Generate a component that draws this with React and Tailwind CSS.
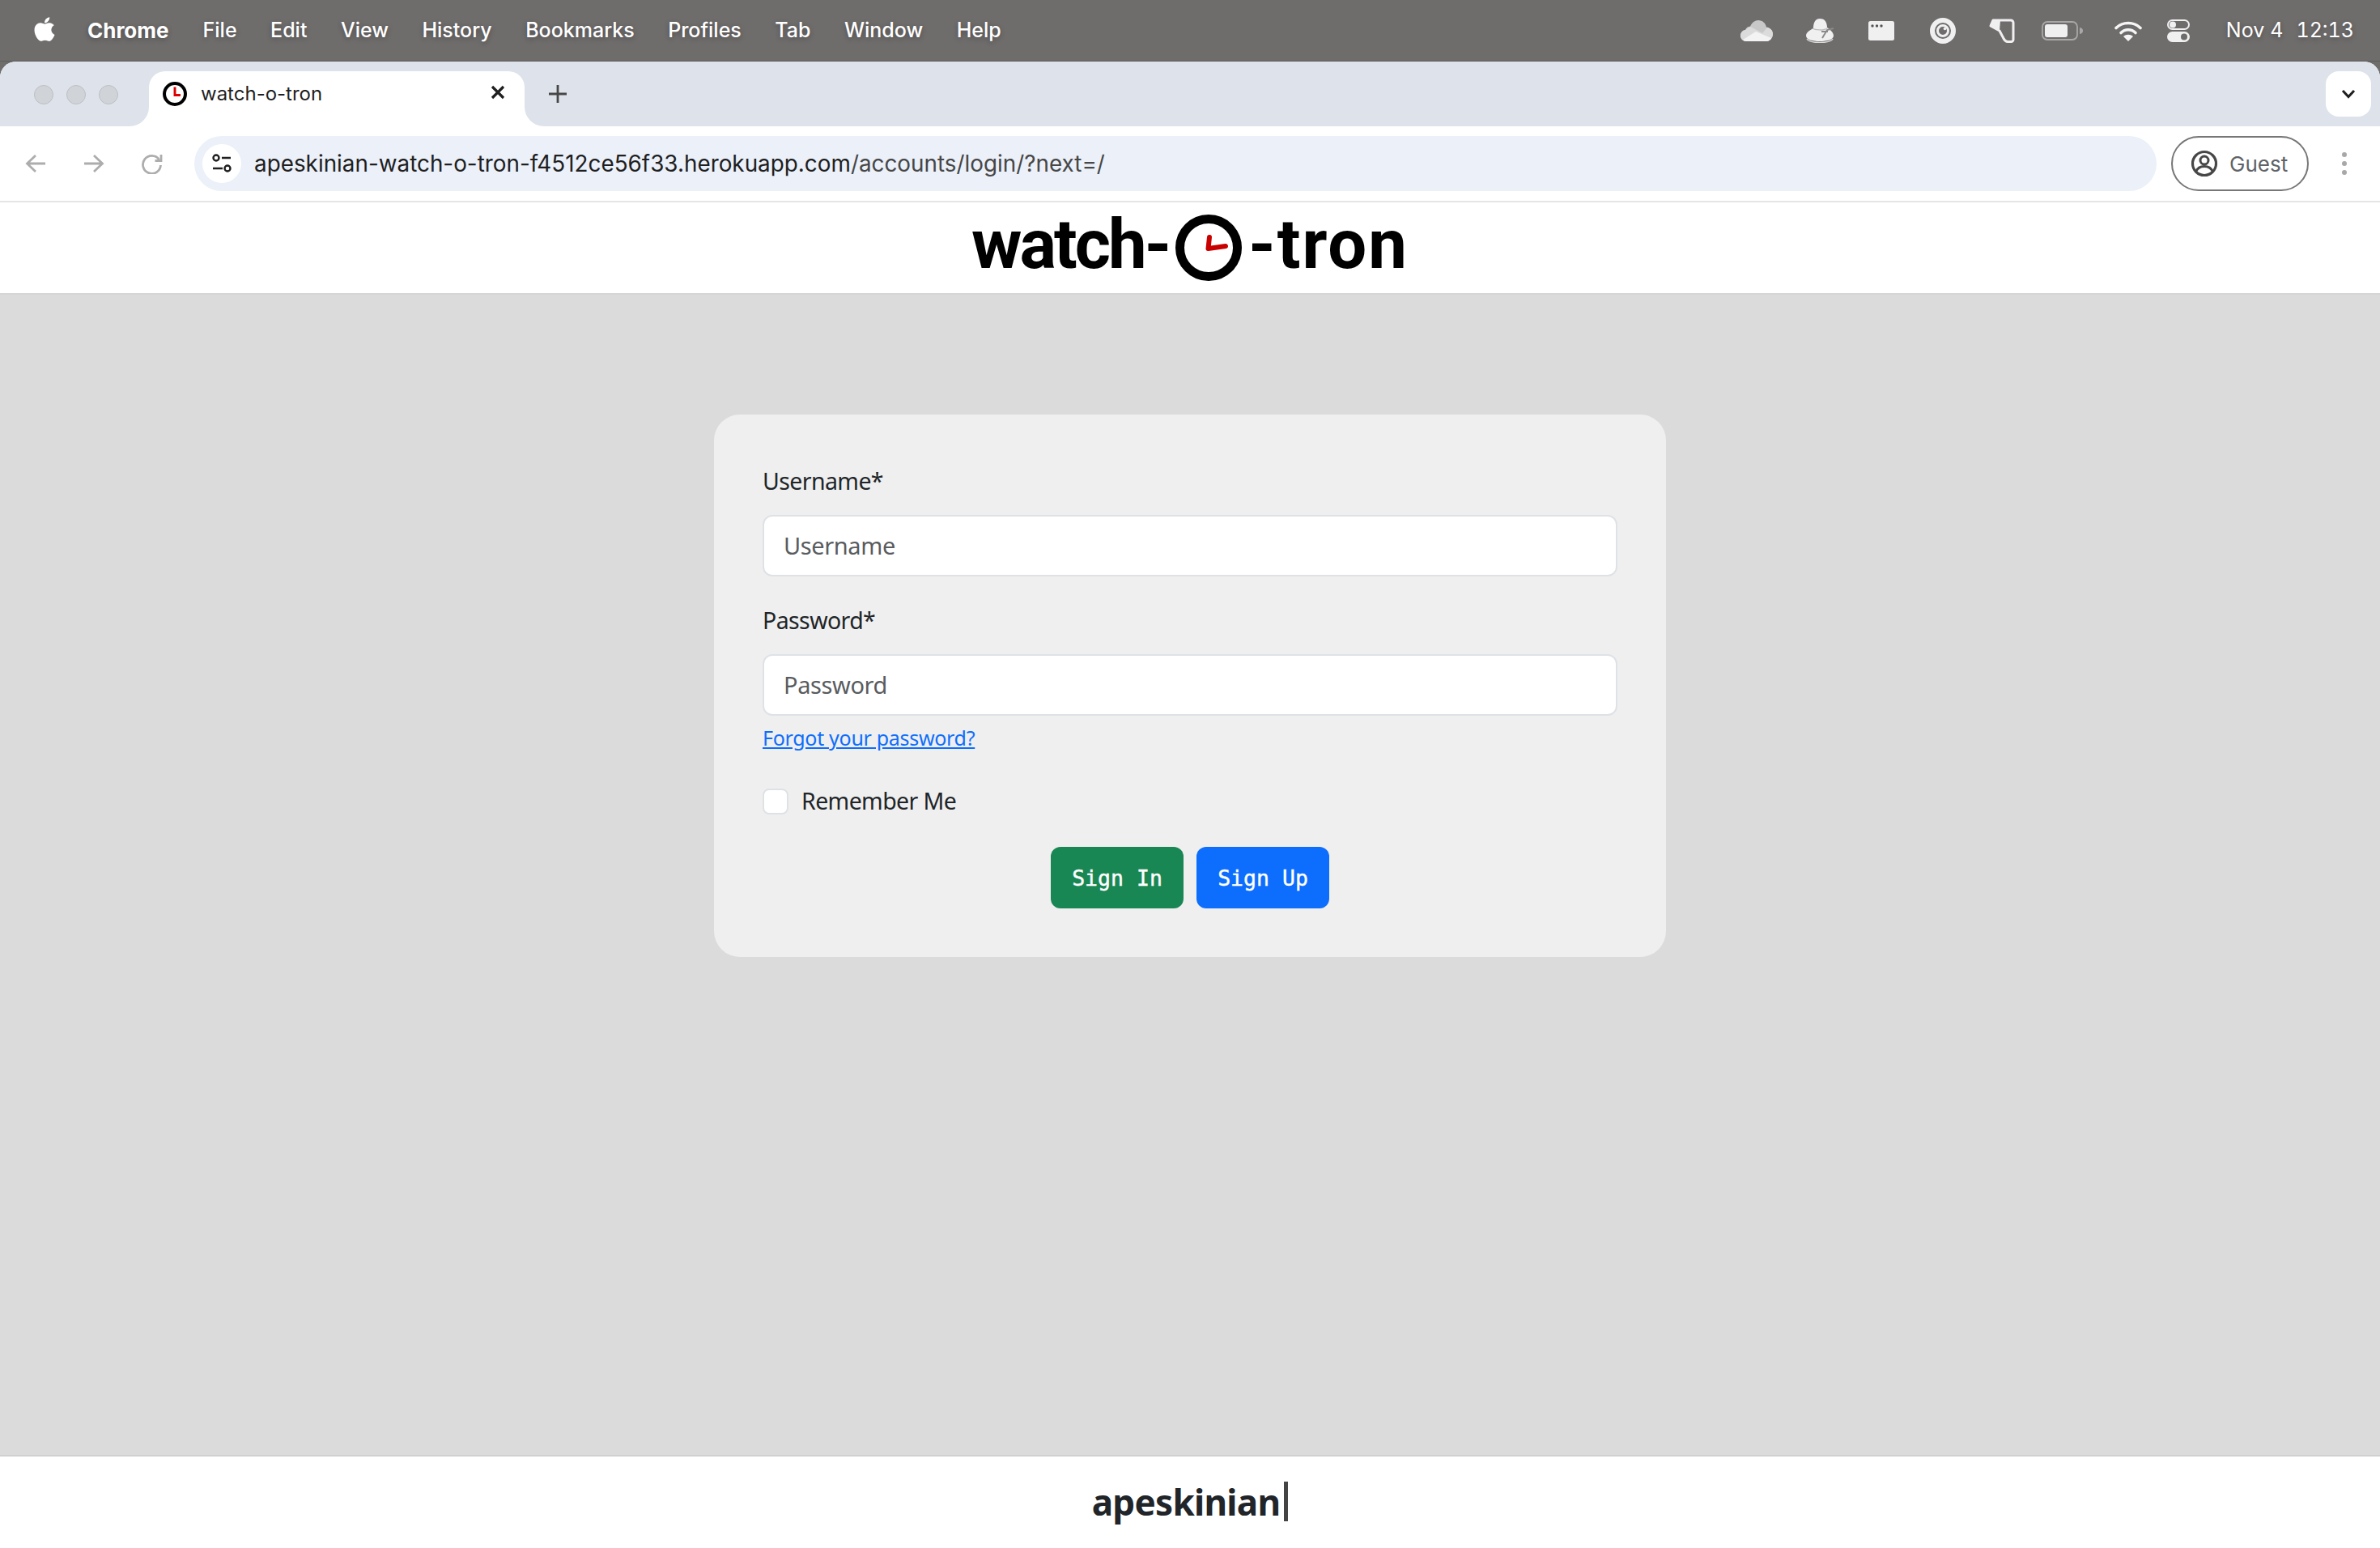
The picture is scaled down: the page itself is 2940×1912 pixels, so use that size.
import React from "react";
import { FaApple } from "react-icons/fa";

const MENU = ["File", "Edit", "View", "History", "Bookmarks", "Profiles", "Tab", "Window", "Help"];

function Cloud() {
  return (
    <svg width="40" height="26" viewBox="0 0 40 26">
      <path d="M7 26a7 7 0 0 1-1-13.900C7 9 10 7.500 12 7.800 14 3 18 0 22 0c5 0 9 3.500 10 8.500 4.500 .5 8 4 8 8.500 0 5-4 9-8 9z" fill="#c9c8c8" />
      <path d="M12 7.800 27 16 33 9c4 .5 7 4 7 8 0 5-4 9-8 9H7c-4 0-7-3-7-7 0-4 3-7 6-7z" fill="#dcdbdb" />
      <path d="M3 24 19 14l19 8c-1 2-3 4-6 4H7c-1.500 0-3-.8-4-2z" fill="#f3f3f3" />
    </svg>
  );
}
function Hat() {
  return (
    <svg width="34" height="30" viewBox="0 0 34 30">
      <path d="M9 12C9 4 12 0 17 0s9 3 9 11c3 2 8 6 8 10 0 5-8 7-17 7S0 26 0 21c0-4 5-7 9-9z" fill="#f0f0f0" />
      <path d="M1 25c2 3.500 9 4.500 16 4.500S31 28.500 33 25" fill="none" stroke="#d8d8d8" strokeWidth="1.500" />
      <path d="M20 24 26 14 34 12M19 16l8 0" fill="none" stroke="#8c8989" strokeWidth="2" />
      <path d="M8 12c3 2 14 3 18 0" fill="none" stroke="#bdbbbb" strokeWidth="1.500" />
    </svg>
  );
}
function WindowIcon() {
  return (
    <svg width="32" height="24" viewBox="0 0 32 24">
      <rect width="32" height="24" rx="2.500" fill="#f0f0f0" />
      <circle cx="5" cy="6" r="1.700" fill="#555" />
      <circle cx="10.500" cy="6" r="1.700" fill="#555" />
      <circle cx="16" cy="6" r="1.700" fill="#555" />
    </svg>
  );
}
function Target() {
  return (
    <svg width="32" height="32" viewBox="0 0 32 32">
      <circle cx="16" cy="16" r="13" fill="none" stroke="#f0f0f0" strokeWidth="6" />
      <circle cx="16" cy="16" r="6.500" fill="none" stroke="#f0f0f0" strokeWidth="3" />
      <circle cx="18.500" cy="13.500" r="1.800" fill="#f0f0f0" />
    </svg>
  );
}
function Tag() {
  return (
    <svg width="32" height="30" viewBox="0 0 32 30">
      <path d="M5 2h22a3 3 0 0 1 3 3v21a2.500 2.500 0 0 1-2.500 2.500H23c-3 0-4-2-5-4L13 15 2 9z" fill="none" stroke="#f0f0f0" strokeWidth="3" strokeLinejoin="round" />
      <path d="M4 2h10l-1 13L1 8z" fill="#f0f0f0" />
    </svg>
  );
}
function Battery() {
  return (
    <svg width="52" height="24" viewBox="0 0 52 24">
      <rect x="1" y="1" width="43" height="22" rx="6" fill="none" stroke="#a9a7a7" strokeWidth="1.800" />
      <rect x="4" y="4" width="28" height="16" rx="3" fill="#f0f0f0" />
      <path d="M47 8c3 .5 4 2 4 4s-1 3.500-4 4z" fill="#a9a7a7" />
    </svg>
  );
}
function Wifi() {
  return (
    <svg width="34" height="26" viewBox="0 0 34 26">
      <path d="M2 9.500C10 1.500 24 1.500 32 9.500" fill="none" stroke="#f5f5f5" strokeWidth="3.600" strokeLinecap="round" />
      <path d="M8 15.500c5-5 13-5 18 0" fill="none" stroke="#f5f5f5" strokeWidth="3.600" strokeLinecap="round" />
      <path d="M17 26 11 20c3.500-3 8.500-3 12 0z" fill="#f5f5f5" />
    </svg>
  );
}
function Control() {
  return (
    <svg width="28" height="28" viewBox="0 0 28 28">
      <rect x="1" y="1" width="26" height="11" rx="5.500" fill="none" stroke="#f0f0f0" strokeWidth="2" />
      <circle cx="7" cy="6.500" r="4" fill="#f0f0f0" />
      <rect x="0" y="15" width="28" height="13" rx="6.500" fill="#f0f0f0" />
      <circle cx="21" cy="21.500" r="4" fill="#6f6c6c" />
    </svg>
  );
}

function Clock({ size, strokeW, handW, big }) {
  return (
    <svg width={size} height={size} viewBox="0 0 82 82" className="shrink-0">
      <circle cx="41" cy="41" r={41 - strokeW / 2} fill="none" stroke="#000" strokeWidth={strokeW} />
      {big ? (
        <path d="M42 28 40.500 42 62 39" fill="none" stroke="#c80000" strokeWidth={handW} strokeLinecap="round" strokeLinejoin="round" />
      ) : (
        <path d="M41 18V45H60" fill="none" stroke="#dd0000" strokeWidth={handW} />
      )}
    </svg>
  );
}

function Foot({ side }) {
  return side === "l" ? (
    <div className="absolute bottom-0 left-[-24px] h-6 w-6 bg-white">
      <div className="h-full w-full rounded-br-[24px] bg-[#dee3eb]" />
    </div>
  ) : (
    <div className="absolute bottom-0 right-[-24px] h-6 w-6 bg-white">
      <div className="h-full w-full rounded-bl-[24px] bg-[#dee3eb]" />
    </div>
  );
}

function Field({ label, placeholder, type }) {
  return (
    <div>
      <label className="mb-4 block h-12 text-[28.500px] leading-[45px] tracking-[-0.6px] text-[#212529]">{label}*</label>
      <input
        type={type}
        placeholder={placeholder}
        className="block h-[76px] w-full rounded-xl border-2 border-[#dee2e6] bg-white px-6 pb-[2px] text-[29px] tracking-[-0.4px] text-[#212529] outline-none placeholder:text-[#595c5f]"
      />
    </div>
  );
}

export default function App() {
  const sf = "font-['Inter','Liberation_Sans',sans-serif]";
  return (
    <div className={`flex h-[1912px] w-[2940px] flex-col overflow-hidden bg-[#6f6c6c] ${sf}`}>
      {/* macOS menu bar */}
      <div className="flex h-[76px] shrink-0 items-center justify-between border-b border-[#5f5c5c] pl-[40px] pr-[32px] text-[25px] text-white [text-shadow:0_2px_6px_rgba(0,0,0,0.3)]">
        <div className="flex items-center">
          <FaApple className="mb-1 h-[34px] w-[30px] text-white" />
          <span className="ml-[38px] text-[26px] font-bold">Chrome</span>
          <div className="ml-[42px] flex gap-[41.500px]">
            {MENU.map((m) => (
              <span key={m} className="font-medium">{m}</span>
            ))}
          </div>
        </div>
        <div className="flex items-center">
          <Cloud />
          <div className="ml-[41px]"><Hat /></div>
          <div className="ml-[43px]"><WindowIcon /></div>
          <div className="ml-[44px]"><Target /></div>
          <div className="ml-[41px]"><Tag /></div>
          <div className="ml-[33px]"><Battery /></div>
          <div className="ml-[38px]"><Wifi /></div>
          <div className="ml-[31px]"><Control /></div>
          <span className="ml-[45px] whitespace-pre">Nov 4</span>
          <span className="ml-[16px] tabular-nums">12:13</span>
        </div>
      </div>

      {/* browser window */}
      <div className="flex min-h-0 flex-1 flex-col overflow-hidden rounded-t-[20px] bg-white">
        <div className="flex h-20 shrink-0 items-start bg-[#dee3eb]">
          <div className="mt-[29px] ml-[42px] flex gap-4">
            <div className="h-6 w-6 rounded-full border border-[#bcbfc3] bg-[#d0d4d8]" />
            <div className="h-6 w-6 rounded-full border border-[#bcbfc3] bg-[#d0d4d8]" />
            <div className="h-6 w-6 rounded-full border border-[#bcbfc3] bg-[#d0d4d8]" />
          </div>
          <div className="relative mt-3 ml-[38px] flex h-[68px] w-[464px] items-start rounded-t-[20px] bg-white pl-[17px] pt-[13px]">
            <Foot side="l" />
            <Foot side="r" />
            <Clock size={30} strokeW={11} handW={8} />
            <span className="ml-[17px] text-[24px] leading-[30px] text-[#1f1f1f]">watch-o-tron</span>
            <svg width="18" height="18" viewBox="0 0 18 18" className="absolute left-[422px] top-[17px]">
              <path d="M2 2 16 16M16 2 2 16" stroke="#1f1f1f" strokeWidth="3.200" />
            </svg>
          </div>
          <svg width="22" height="22" viewBox="0 0 22 22" className="mt-[29px] ml-[30px]">
            <path d="M11 0V22M0 11H22" stroke="#474747" strokeWidth="2.800" />
          </svg>
          <div className="mt-3 ml-auto mr-[11px] flex h-14 w-14 items-center justify-center rounded-2xl bg-white">
            <svg width="18" height="12" viewBox="0 0 18 12">
              <path d="M2 2 9 9.500 16 2" fill="none" stroke="#1f1f1f" strokeWidth="3" />
            </svg>
          </div>
        </div>

        <div className="flex h-[94px] shrink-0 items-start rounded-t-[20px] border-b-2 border-[#e5e5e5] bg-white pt-3">
          <div className="flex h-[68px] items-center">
            <svg width="26" height="24" viewBox="0 0 26 24" className="ml-[31px]">
              <path d="M25 12H3M13 2 2.500 12 13 22" fill="none" stroke="#adadad" strokeWidth="2.800" />
            </svg>
            <svg width="26" height="24" viewBox="0 0 26 24" className="ml-[46px]">
              <path d="M1 12H23M13 2 23.500 12 13 22" fill="none" stroke="#adadad" strokeWidth="2.800" />
            </svg>
            <svg width="26" height="26" viewBox="0 0 26 26" className="ml-[46px]">
              <path d="M21.500 8A11 11 0 1 0 23.500 15" fill="none" stroke="#adadad" strokeWidth="2.800" />
              <path d="M24 2V9.500H16.500" fill="none" stroke="#adadad" strokeWidth="2.800" />
            </svg>
          </div>
          <div className="ml-[39px] flex h-[68px] w-[2424px] items-center rounded-full bg-[#ebf0f9] pl-[10px]">
            <div className="flex h-12 w-12 items-center justify-center rounded-full bg-white">
              <svg width="26" height="24" viewBox="0 0 26 24">
                <circle cx="6" cy="5" r="3.500" fill="none" stroke="#1f1f1f" strokeWidth="2.400" />
                <path d="M13 5H24M2 18H14" stroke="#1f1f1f" strokeWidth="2.400" />
                <circle cx="20" cy="18" r="3.500" fill="none" stroke="#1f1f1f" strokeWidth="2.400" />
              </svg>
            </div>
            <span className="ml-[16px] pt-[2px] text-[27.850px] text-[#1f1f1f]">
              apeskinian-watch-o-tron-f4512ce56f33.herokuapp.com<span className="text-[#474747]">/accounts/login/?next=/</span>
            </span>
          </div>
          <div className="ml-[18px] flex h-[68px] w-[170px] items-center rounded-full border-2 border-[#777777] pl-[22px]">
            <svg width="34" height="34" viewBox="0 0 34 34">
              <circle cx="17" cy="17" r="14.500" fill="none" stroke="#474747" strokeWidth="3.200" />
              <circle cx="17" cy="13" r="5" fill="none" stroke="#474747" strokeWidth="3" />
              <path d="M6.500 27c2-4.500 6-6.500 10.500-6.500S25.500 22.500 27.500 27" fill="none" stroke="#474747" strokeWidth="3" />
            </svg>
            <span className="ml-[14px] text-[26px] text-[#5f6368]">Guest</span>
          </div>
          <div className="ml-[41px] flex h-[68px] flex-col items-center justify-center gap-[5px]">
            <div className="h-[6px] w-[6px] rounded-full bg-[#a8a8a8]" />
            <div className="h-[6px] w-[6px] rounded-full bg-[#a8a8a8]" />
            <div className="h-[6px] w-[6px] rounded-full bg-[#a8a8a8]" />
          </div>
        </div>

        {/* page */}
        <div className="flex h-[112px] shrink-0 items-center justify-center gap-2 bg-white font-['Roboto',sans-serif] text-[85px] font-bold leading-none text-black">
          <span className="mb-[7px] tracking-[-3px]">watch-</span>
          <Clock size={82} strokeW={11} handW={6} big />
          <span className="mb-[7px] tracking-[2px]">-tron</span>
        </div>

        <main className="flex min-h-0 flex-1 justify-center border-t-2 border-[#d6d6d6] bg-[#dbdbdb] pt-[148px] font-['Noto_Sans',sans-serif]">
          <form className="flex h-[670px] w-[1176px] flex-col rounded-[32px] bg-[#efefef] p-[60px]">
            <Field label="Username" placeholder="Username" type="text" />
            <div className="mt-8">
              <Field label="Password" placeholder="Password" type="password" />
            </div>
            <a href="#" className="mt-[6px] h-[42px] text-[25px] leading-[42px] tracking-[-0.3px] text-[#0d6efd] underline">Forgot your password?</a>
            <label className="mt-[34px] flex h-12 items-center">
              <span className="h-8 w-8 rounded-lg border-2 border-[#dee2e6] bg-white" />
              <span className="mb-[2px] ml-4 text-[28.500px] tracking-[-0.6px] text-[#212529]">Remember Me</span>
            </label>
            <div className="mt-8 flex justify-center gap-4">
              <button type="button" className="h-[76px] w-[164px] rounded-xl bg-[#198754] pt-[2px] font-['DejaVu_Sans_Mono',monospace] text-[26.500px] text-white [-webkit-text-stroke:0.4px_white]">Sign In</button>
              <button type="button" className="h-[76px] w-[164px] rounded-xl bg-[#0d6efd] pt-[2px] font-['DejaVu_Sans_Mono',monospace] text-[26.500px] text-white [-webkit-text-stroke:0.4px_white]">Sign Up</button>
            </div>
          </form>
        </main>

        <footer className="flex h-[115px] shrink-0 items-center justify-center border-t-2 border-[#d0d0d0] bg-white pb-[2px] font-['Noto_Sans',sans-serif] text-[44px] font-bold tracking-[-0.7px] text-[#212529]">
          <span>apeskinian</span>
          <span className="ml-[5px] h-[49px] w-[5px] bg-[#444444]" />
        </footer>
      </div>
    </div>
  );
}
